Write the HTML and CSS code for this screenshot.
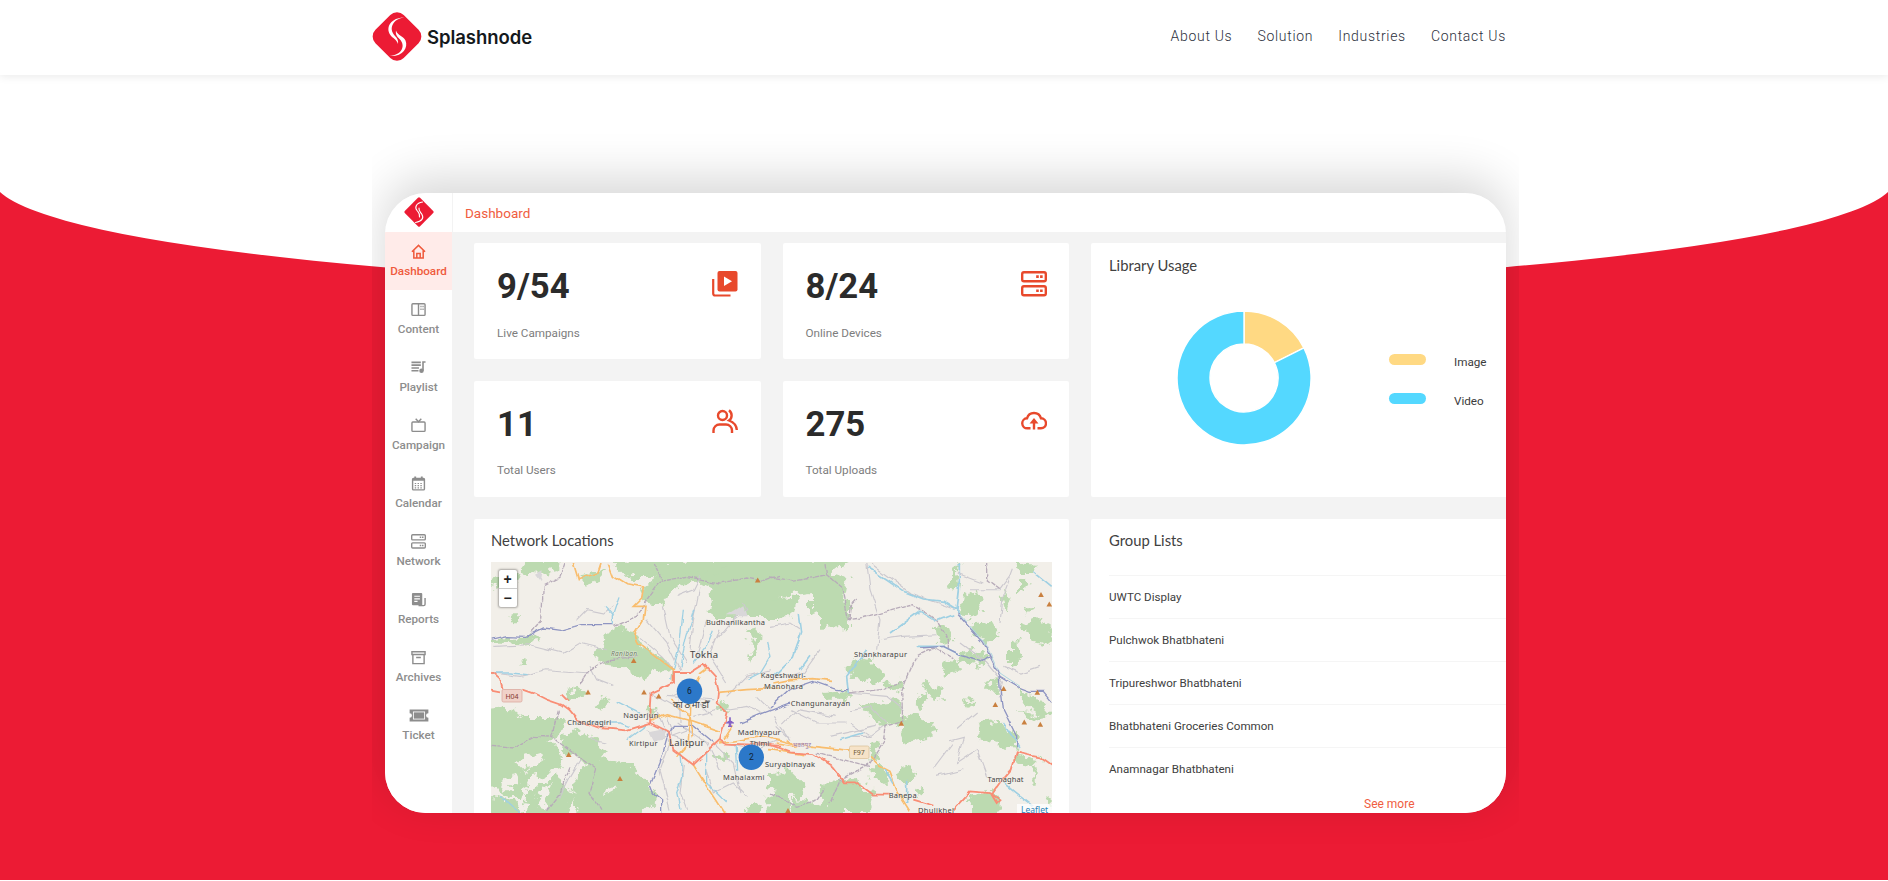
FILE: index.html
```html
<!DOCTYPE html>
<html lang="en">
<head>
<meta charset="utf-8">
<title>Splashnode</title>
<link rel="stylesheet" href="styles.css">
</head>
<body>
<svg class="defs" width="0" height="0">
  <symbol id="server" viewBox="0 0 24 24"><g fill="none" stroke="currentColor" stroke-width="2.2"><rect x="1.1" y="1.1" width="21.8" height="8.300" rx="1.6"/><rect x="1.1" y="14.1" width="21.8" height="8.300" rx="1.6"/></g><path d="M14 4h2.4v2.4H14zM17.6 4H20v2.4h-2.4zM14 17h2.4v2.4H14zM17.6 17H20v2.4h-2.4z" fill="currentColor"/></symbol>
</svg>
<header class="topbar">
  <a class="brand">
    <svg class="brand-mark" viewBox="0 0 50 51"><rect x="5" y="5.5" width="40" height="40" rx="9.500" transform="rotate(45 25 25.5)" fill="#ec1b34"/><path d="M32.500 6.500C19 6.500 13.500 16 18 23.500C20.300 27.300 24.500 28 26 33C26.500 29.500 25.500 27.500 23 25C19.500 21 19 17.500 20.500 14C22.500 9.500 27 7 32.500 6.500Z" fill="#fff"/><path d="M17.500 45C30.500 46 36.500 37 33.500 29.500C31.500 25 25.500 24.500 24 19.500C23.300 23.500 25 25.500 27.500 28C31 31.500 31.300 35.500 29.700 38.500C27.500 42.500 23 44.500 17.500 45Z" fill="#fff"/></svg>
    <span class="brand-name">Splashnode</span>
  </a>
  <nav class="nav"><a>About Us</a><a>Solution</a><a>Industries</a><a>Contact Us</a></nav>
</header>
<main class="hero">
  <svg class="hero-bg" viewBox="0 0 1888 805"><path d="M0 117A951 109.500 0 0 0 1888 117V805H0Z" fill="#ec1b34"/></svg>
  <div class="stage">
    <div class="panel">
      <aside class="side">
        <div class="side-logo"><svg width="32" height="32" viewBox="0 0 32 32"><rect x="5.200" y="5.200" width="21.600" height="21.600" rx="1.500" transform="rotate(45 16 16)" fill="#ec1b34"/><path d="M19.500 6C13 7 11.500 11.500 14 14.500C16 17 17 17.500 16.500 21M12.500 26.500C19 25.500 21 22 19 18.500C17.500 16 15.500 15 16 12" fill="none" stroke="#fff" stroke-width="1.100" stroke-linecap="round"/></svg></div>
        <a class="item active"><svg viewBox="0 0 16 16"><path d="M1 8.300L8 1.500L15 8.300M3 7V15H13V7M6.200 15V10H9.800V15" fill="none" stroke="currentColor" stroke-width="1.600"/></svg><span>Dashboard</span></a>
        <a class="item"><svg viewBox="0 0 16 16"><g fill="none" stroke="currentColor" stroke-width="1.500"><rect x="1" y="1.800" width="14" height="12.500" rx="1"/><path d="M8 2V14"/></g><path d="M10 4h1.300v1.500H10zM12.200 4h1.300v1.500h-1.300zM10 7h1.300v1.500H10zM12.200 7h1.300v1.500h-1.300z" fill="currentColor"/></svg><span>Content</span></a>
        <a class="item"><svg viewBox="0 0 16 16"><path d="M.5 2.500H10.500M.5 5.500H10.500M.5 8.500H8.500M.5 11.500H8M12.800 11.500V2.200H15.500" fill="none" stroke="currentColor" stroke-width="1.700"/><circle cx="11.200" cy="11.500" r="2.400" fill="currentColor"/></svg><span>Playlist</span></a>
        <a class="item"><svg viewBox="0 0 16 16"><g fill="none" stroke="currentColor" stroke-width="1.500"><rect x="1" y="4.300" width="14" height="10" rx="1"/><path d="M5 .8L8 4L11 .8"/></g></svg><span>Campaign</span></a>
        <a class="item"><svg viewBox="0 0 16 16"><g fill="none" stroke="currentColor" stroke-width="1.500"><rect x="1.700" y="2.500" width="12.600" height="12.300" rx="1"/><path d="M1.700 4H14.300M4.500 .5V3M11.500 .5V3" stroke-width="2"/><path d="M4 8H12.500M4 10.300H12.500M4 12.600H12.500" stroke-dasharray="1.500 1.500" stroke-width="1.200"/></g></svg><span>Calendar</span></a>
        <a class="item"><svg viewBox="0 0 24 24"><use href="#server"/></svg><span>Network</span></a>
        <a class="item"><svg viewBox="0 0 16 16"><path d="M2 1H11a1 1 0 0 1 1 1V14H2a1 1 0 0 1-1-1V2a1 1 0 0 1 1-1Z" fill="currentColor"/><path d="M15 6.500V13a1.500 1.500 0 0 1-1.500 1.500H8" fill="none" stroke="currentColor" stroke-width="1.500"/><path d="M3.500 4.500H9.500M3.500 7.300H9.500M3.500 10H7" stroke="#fff" stroke-width="1.200"/></svg><span>Reports</span></a>
        <a class="item"><svg viewBox="0 0 16 16"><g fill="none" stroke="currentColor" stroke-width="1.500"><path d="M1 1.800H15V4.800H1ZM2 4.800V14.500H14V4.800M5.500 8H10.500"/></g></svg><span>Archives</span></a>
        <a class="item"><svg class="wide" viewBox="0 0 20 16"><path d="M0 1.500H20V5.500a2.500 2.500 0 0 0 0 5V14.500H0V10.500a2.500 2.500 0 0 0 0-5Z" fill="currentColor"/><rect x="4" y="4.200" width="12" height="7.600" fill="none" stroke="#fff" stroke-width=".9"/></svg><span>Ticket</span></a>
      </aside>
      <section class="main">
        <div class="crumb">Dashboard</div>
        <div class="grid">
          <div class="stat"><div><b>9/54</b><small>Live Campaigns</small></div>
            <svg viewBox="0 0 26 26"><path d="M1.200 8V22.500a2 2 0 0 0 2 2H18.500" fill="none" stroke="currentColor" stroke-width="2.200"/><rect x="5.500" y="0" width="20" height="20.500" rx="2" fill="currentColor"/><path d="M12 5.500V15L20 10.200Z" fill="#fff"/></svg></div>
          <div class="stat"><div><b>8/24</b><small>Online Devices</small></div>
            <svg viewBox="0 0 24 24"><use href="#server"/></svg></div>
          <div class="card usage">
            <h2>Library Usage</h2>
            <div class="usage-body">
              <svg class="donut" viewBox="-67 -67 134 134"><g stroke="#fff" stroke-width="1.400"><path d="M0 -67A67 67 0 0 1 59.900 -30.100L30.400 -15.300A34 34 0 0 0 0 -34Z" fill="#ffd983"/><path d="M59.900 -30.100A67 67 0 1 1 0 -67V-34A34 34 0 1 0 30.400 -15.300Z" fill="#54d8ff"/></g></svg>
              <ul class="legend"><li><i class="pill image"></i>Image</li><li><i class="pill video"></i>Video</li></ul>
            </div>
          </div>
          <div class="stat"><div><b>11</b><small>Total Users</small></div>
            <svg viewBox="0 -1 26 26"><g fill="none" stroke="currentColor" stroke-width="2.400"><circle cx="10.500" cy="5.500" r="4.500"/><path d="M1.500 23V20.500a6 6 0 0 1 6-6H14a6 6 0 0 1 6 6V23M17 .3C20.500 3 20.500 8 17 10.500C21 12 24.500 14.500 24.800 20"/></g></svg></div>
          <div class="stat"><div><b>275</b><small>Total Uploads</small></div>
            <svg viewBox="0 -1 26 26"><g fill="none" stroke="currentColor" stroke-width="2.400"><path d="M9.500 18.300H6.500A5 5 0 0 1 6 8.300A7.300 7.300 0 0 1 20 8.300A5 5 0 0 1 20 18.300H16.500M13 19.500V10"/></g><path d="M8.500 13.500L13 8L17.500 13.500Z" fill="currentColor"/></svg></div>
          <div class="card network">
            <h2>Network Locations</h2>
            <div class="map">
<svg class="map-art" viewBox="0 0 561 251">
<defs>
<filter id="rough" x="0" y="0" width="100%" height="100%"><feTurbulence type="fractalNoise" baseFrequency=".1" numOctaves="4" seed="4"/><feDisplacementMap in="SourceGraphic" scale="16" xChannelSelector="R" yChannelSelector="G"/></filter>
<filter id="wavy" x="0" y="0" width="100%" height="100%"><feTurbulence type="fractalNoise" baseFrequency=".07" numOctaves="2" seed="9"/><feDisplacementMap in="SourceGraphic" scale="6" xChannelSelector="R" yChannelSelector="G"/></filter>
</defs>
<rect width="561" height="251" fill="#f2efe9"/>
<g filter="url(#rough)" fill="#bcdab0">
<g transform="translate(-11 -52.300) scale(.33333)">
<path d="M150 150H235V180L170 195L120 190ZM20 215L100 190L130 200L90 225L30 240ZM300 195L375 180L360 210L320 225ZM385 150H900V205L470 205L430 195Z"/>
<path d="M560 180L700 190L760 170L900 170V325L700 325L670 300L700 290L690 240L640 215L570 250L540 290L500 285L480 240Z"/>
<path d="M345 435L370 400L395 360L440 350L470 390L510 420L560 460L580 480L545 490L520 480L500 510L470 500L430 470L370 465ZM95 320H120V335H95ZM125 455H140V475H125ZM20 385L150 380L180 400L110 405L20 400Z"/>
<path d="M20 595L70 590L130 625L250 625L240 680L170 695L130 710L90 695L20 690ZM250 675L310 665L350 690L375 720L340 770L300 750L260 740L240 710ZM0 690L200 680L240 740L250 770L200 790L150 800L120 870L60 850L0 790ZM290 790L370 740L450 770L500 820L530 870L470 930H300L280 860ZM140 840L230 800L290 850L250 930H130ZM20 860L90 870L140 930H30ZM260 545L300 535L330 560L300 570L260 565ZM340 580L380 560L390 580L360 600ZM800 360L840 350L835 420L810 460L820 410ZM720 570L750 580L745 610L715 600ZM860 860L930 830V930H870ZM790 910L830 880L850 930H790ZM500 600H520V615H500ZM700 740L740 735V750H700Z"/>
</g>
<g fill="#f2efe9" transform="translate(-11 -52.300) scale(.33333)"><path d="M100 760L190 730L200 745L130 790ZM270 760L300 765L270 850L255 840ZM60 820L110 790L120 810L80 850ZM170 850L210 820L190 900ZM380 840L410 830L400 850Z"/></g>
<g transform="translate(279 -52.300) scale(.33333)">
<path d="M0 150H240L180 195L235 210L225 260L237 270V355L150 357V320L120 310V250L0 262ZM0 262L75 265L80 295L60 323H0ZM235 480L270 445L310 455L345 490L330 520L250 510ZM160 550L230 545L240 570L170 570ZM270 590L390 575L400 640L340 650L310 620ZM345 525L395 510L405 540L370 545ZM385 640L440 620L500 650L470 690L410 700ZM380 775L420 765L445 800L430 820L390 810ZM300 770L330 760L360 800L340 820L305 810ZM300 700L325 690V745L305 750Z"/>
<path d="M570 160L560 240L530 235L545 200ZM580 240L630 260L640 295L600 330L570 310ZM600 345L670 335L690 370L650 400L620 380ZM500 350L540 360L550 390L510 400ZM560 430L620 420L660 450L620 465L560 455ZM520 460L560 450L570 480L530 500ZM720 400L745 395L750 450L720 470ZM740 160L800 165L790 190L750 190ZM750 205L775 215L765 250L750 240ZM760 345L800 330L845 350L845 405L800 395L770 375ZM765 285L790 280L770 315ZM690 250L720 255L710 310L700 300ZM430 560L470 550L480 580L450 600ZM460 520L520 540L510 570L480 560ZM580 570L605 575L600 595ZM640 520L680 515L690 540H650ZM740 530L800 560L845 610L830 625L770 590ZM750 605L840 615L830 620L760 625ZM620 640L680 630L740 680L735 725L690 700L630 690ZM740 740L810 750L790 770L745 765ZM790 770H800V825H790ZM590 865L670 845L690 880L680 920H620ZM0 800L60 780L110 830L90 870L0 830ZM140 830L240 800L310 850L300 910H200L160 870ZM70 870L200 890L220 920H60ZM440 835L470 845L450 860ZM830 870L845 860V900Z"/>
</g></g>
<g filter="url(#wavy)" fill="none">
<g transform="translate(-11 -52.300) scale(.33333)">
<g stroke="#ccc9cf" stroke-width="3.400"><path d="M290 330L320 300L370 310L400 290M40 410L150 405L250 430L300 400L380 420M40 490L120 500L200 480L330 490M330 470L350 510L400 530M480 380L550 440L580 480M500 330L560 400L600 480M550 290L570 380L620 460M660 230L640 330L630 420M590 260L640 240L660 200M700 400L760 330L800 300L790 280M680 330L650 440M720 360L690 440L740 520M740 560L800 500L870 480M510 550L600 600M530 600L570 700L540 780L570 900M590 640L680 700L720 780M600 520V640M560 560L700 570M640 620L720 600M580 560L620 540L700 620M610 760L600 850L620 900M680 780L700 850L760 820L800 860M700 700L760 760L780 850M560 620L580 680L640 700M540 690L620 660M740 700L830 720L900 690M730 600L800 590L850 610M500 660L550 690M300 750L270 800L240 860M380 700L330 690M830 560L870 600"/></g>
<g fill="#d9d7d9"><path d="M505 665L555 655V690L520 695ZM740 320L790 290L800 320ZM165 195L185 185L180 215Z"/></g>
<g stroke="#b7abb9" stroke-width="4" stroke-dasharray="14 3"><path d="M255 160L240 200L190 225L185 330L150 370M400 350L470 320L500 270L540 215L620 200L720 220L800 205L850 215L900 200M520 160L545 210M35 710L100 715L160 680L215 682L300 745L350 780L330 850L360 900M235 600L215 680M300 520L320 490L390 450L470 440M270 770L240 850L200 900"/></g>
<g stroke="#8f95c2" stroke-width="4"><path d="M35 388L80 378L140 380L190 355L240 362L300 345L400 345M515 820L540 760L560 690L580 650L640 650L700 700M520 850L545 870V920M780 640L850 610L930 580M510 825L520 850"/></g>
<g stroke="#9fd0e3" stroke-width="4"><path d="M375 290L405 320M420 260L400 320V345M35 490L90 490L140 495M610 300L600 400L580 480L575 510M645 300L620 380L600 470M700 360L680 410L640 460M860 400L870 440L840 490L800 510M410 575L480 610M330 640L420 640L450 650M440 690L500 645M600 730L605 800L590 850L600 900M680 730V820L740 880M765 700L770 780M60 860L120 910"/></g>
<g stroke="#f9bd6d" stroke-width="5"><path d="M280 160L295 210L350 190L360 160M385 160L400 200L440 225L490 235L485 265L460 290L495 290L490 330L465 370L475 400L540 450L580 480V515M510 635L560 615L620 630L720 665M570 570L630 620L640 680M660 500L630 560L625 700L590 740M640 765L680 830L735 915M715 548L800 540L900 535M735 690L760 650M660 490L680 475M720 700L850 680L900 690"/></g>
<g stroke="#f98d74" stroke-width="5.500"><path d="M33 485L60 510L68 540M33 540L60 545M130 540L160 550L200 570L245 585L265 600L290 630L360 655L440 662L510 640L570 670L580 720L640 765L720 690L740 610L710 580L715 540L705 500L670 462L630 487H582V517L515 548L510 640M720 690L740 702L900 708M245 555L265 575"/></g>
</g>
<g transform="translate(279 -52.300) scale(.33333)">
<g stroke="#ccc9cf" stroke-width="3.400"><path d="M290 160L300 240L330 330L320 420M600 240L690 240L720 200M730 180L700 260L690 340M330 390L400 380L500 375M240 550L350 560L400 600M240 600L300 590L350 640M40 640L80 600L200 620M60 600L140 640L230 640M540 690L580 680L560 760L620 720L650 800M490 780L550 700M500 800L580 780M560 660L620 610M700 470L750 490L810 470M570 400L650 460L700 520L690 560M0 350L60 340L90 360M150 420L100 490L60 500M300 160L420 250L560 300M180 680L320 650M20 650L60 690L10 620M250 680H300M560 190L640 220M240 640L300 680L340 650"/></g>
<g stroke="#b7abb9" stroke-width="4" stroke-dasharray="14 3"><path d="M0 205L70 215L170 195L215 235L235 330L300 320L430 285L500 330L535 390V415M165 160L170 195M240 330L245 280L260 265M405 520L440 440L490 415L550 450M235 550L330 540L410 510L395 545L398 635L345 650L340 700L300 760L210 810L180 880M650 160V210L690 240M140 730L220 750L300 770M0 850L80 890L140 870L160 840"/></g>
<g stroke="#9fd0e3" stroke-width="5"><path d="M295 175L350 210L400 245L460 268L520 275L560 300M568 160V240L560 310M360 370L400 340L450 305L500 335L550 315M88 315L95 370L70 440L10 500M235 550L230 500L290 420M440 410L520 410L570 435M790 185L845 230M700 820L750 860L790 890M410 810V880M120 440L90 480M210 690L280 670M345 780L370 820M700 640L750 715"/></g>
<g stroke="#8f95c2" stroke-width="4"><path d="M560 310L640 400L660 440L690 500L740 530L780 545H820L845 575M660 440L640 455L570 435L520 410L450 415M0 595L60 540L130 515L200 540H235M690 500L700 600L740 680V715"/></g>
<g stroke="#aed5df" stroke-width="3"><path d="M560 305L645 400L690 490L750 530"/></g>
<g stroke="#f9bd6d" stroke-width="5"><path d="M0 685L60 700L130 710L240 722M0 720L100 735M10 520L60 510L130 507L180 512M300 740L330 770L360 785L385 850L420 905M20 700L80 710L50 690"/></g>
<g stroke="#f98d74" stroke-width="5.500"><path d="M0 705L60 728L130 733L190 770L225 815L255 815L310 855H360M430 870L490 888M550 900L600 845L660 850L690 870L680 880L665 855L690 820L725 780L740 725L780 735L810 740L845 765"/></g>
</g></g>
<defs><path id="peak" d="M-2.800 0L0 -5L2.800 0z"/></defs>
<g fill="#c9803f"><use href="#peak" x="142.700" y="101"/><use href="#peak" x="97" y="132.400"/><use href="#peak" x="153" y="132.400"/><use href="#peak" x="167.700" y="136.400"/><use href="#peak" x="77.700" y="195"/><use href="#peak" x="129" y="219"/><use href="#peak" x="266.700" y="20.400"/><use href="#peak" x="550" y="35"/><use href="#peak" x="558.300" y="44.400"/><use href="#peak" x="512.700" y="129"/><use href="#peak" x="546.300" y="132.700"/><use href="#peak" x="504.300" y="145"/><use href="#peak" x="533.300" y="162.400"/><use href="#peak" x="549.300" y="164.700"/><use href="#peak" x="410.300" y="163.700"/><use href="#peak" x="297" y="251"/></g>
<rect x="11" y="127.500" width="20" height="12.500" rx="1.500" fill="#f0d1c8" stroke="#dcaaa0" stroke-width=".8"/><text x="21" y="136.500" class="road h">H04</text>
<rect x="358.500" y="184" width="19.500" height="12.500" rx="1.500" fill="#f6e3c8" stroke="#dcc49c" stroke-width=".8"/><text x="368" y="193" class="road">F97</text>
<path d="M239.200 155.500v3l3.500 2.500h-3v2.500l1.200 1h-3.800l1.200-1v-2.500h-3l3.500-2.500v-3z" fill="#8461c4" stroke="#8461c4"/>
<g class="places">
<text x="215" y="62.500" textLength="59">Budhanilkantha</text><text x="199" y="95.500" class="town" textLength="28">Tokha</text><text x="120" y="94" class="wood" textLength="26">Raniban</text>
<text x="269.700" y="116" textLength="45">Kageshwari-</text><text x="273" y="126.500" textLength="39">Manohara</text><text x="363" y="94.500" textLength="53">Shankharapur</text><text x="299.700" y="143.500" textLength="59.500">Changunarayan</text>
<text x="132.300" y="156" textLength="35">Nagarjun</text><text x="76.300" y="163" textLength="44">Chandragiri</text><text x="138" y="184" textLength="28.500">Kirtipur</text><text x="178" y="183.500" class="town" textLength="35.500">Lalitpur</text>
<text x="246.700" y="173" textLength="43">Madhyapur</text><text x="268.500" y="183.500" text-anchor="middle">Thimi</text><text x="274" y="204.500" textLength="50">Suryabinayak</text><text x="232" y="218" textLength="41.500">Mahalaxmi</text><text x="397.700" y="235.500" textLength="28">Banepa</text><text x="427" y="250.500" textLength="36">Dhulikhel</text><text x="496.500" y="219.500" textLength="36">Tamaghat</text>
<text x="182" y="146" class="town" textLength="36">काठमाडौँ</text><text x="302" y="184.500" class="np" textLength="18">भक्तपुर</text>
</g>
<circle cx="198.500" cy="129.300" r="12.700" fill="#2c78c9"/><text x="198.500" y="131.500" class="pin">6</text>
<circle cx="260.300" cy="195.300" r="12.700" fill="#2c78c9"/><text x="260.300" y="197.500" class="pin">2</text>
</svg>
              <div class="zoomer"><span>+</span><span>−</span></div>
              <span class="credit">Leaflet</span>
            </div>
          </div>
          <div class="card groups">
            <h2>Group Lists</h2>
            <ul><li>UWTC Display</li><li>Pulchwok Bhatbhateni</li><li>Tripureshwor Bhatbhateni</li><li>Bhatbhateni Groceries Common</li><li>Anamnagar Bhatbhateni</li></ul>
            <a class="more">See more</a>
          </div>
        </div>
      </section>
    </div>
  </div>
</main>
</body>
</html>
```
FILE: styles.css
```css
* { box-sizing: border-box; }
html, body { margin: 0; height: 881px; overflow: hidden; background: #fff; font-family: Roboto, sans-serif; }
ul { list-style: none; margin: 0; padding: 0; }
.defs { position: absolute; }

.topbar { position: relative; z-index: 2; height: 75px; padding: 0 382px 0 372px; display: flex; justify-content: space-between; background: #fff; box-shadow: 0 2px 8px rgba(0, 0, 0, .08); }
.brand { display: flex; align-items: flex-start; padding-top: 11px; gap: 5px; }
.brand-mark { width: 50px; height: 51px; }
.brand-name { font: 600 18.500px/52px Inter, sans-serif; color: #14191c; letter-spacing: -.05px; }
.nav { display: flex; gap: 25px; padding-top: 26px; font-weight: 300; font-size: 14px; line-height: 20px; letter-spacing: .7px; color: #2c303c; }

.hero { position: relative; height: 805px; }
.hero-bg { position: absolute; inset: 0; width: 100%; height: 805px; }
.stage { position: relative; margin-left: 372px; width: 1147px; padding: 118px 13px 0; clip-path: inset(0); height: 805px; }
.panel { display: flex; width: 1121px; height: 620px; border-radius: 41px; overflow: hidden; background: #f3f3f3; box-shadow: 0 -14px 48px rgba(0, 0, 0, .16); }

.side { width: 67px; flex: none; background: #fff; }
.side-logo { height: 39px; padding: 3px 0 0 17.500px; }
.side-logo svg { display: block; }
.item { display: flex; flex-direction: column; align-items: center; height: 58px; padding-top: 11.500px; font-weight: 500; font-size: 11.700px; line-height: 14px; color: #8d8d8d; }
.item svg { width: 15px; height: 15px; margin-bottom: 5.500px; }
.item svg.wide { width: 20px; }
.item.active { background: #ffebe9; color: #ef5a3c; }

.main { flex: 1; min-width: 0; }
.crumb { height: 39px; padding-left: 12px; font-size: 13.500px; line-height: 41px; background: #fff; border-left: 1px solid #f3f3f3; color: #f05d41; }
.grid { display: grid; grid-template-columns: 286.500px 286.500px 430px; grid-template-rows: 115.700px 115.700px 330px; gap: 22px; padding: 11.200px 0 0 22px; }
.stat, .card { background: #fff; border-radius: 2px; }
.stat { display: flex; justify-content: space-between; padding: 23px 22.500px 0 23px; }
.stat b { display: block; font-size: 34.700px; line-height: 41px; color: #2b2b2b; }
.stat small { display: block; margin-top: 18.500px; font-size: 11.700px; line-height: 14px; color: #7d7d7d; }
.stat svg { width: 26px; height: 26px; margin-top: 5px; color: #e8492c; }

h2 { margin: 0; font: 400 14.800px/20px Lato, sans-serif; color: #414141; }
.card { padding: 11.500px 17px 0; }
.usage { grid-row: span 2; padding-left: 18px; }
.usage-body { display: flex; padding: 36.500px 0 0 67.500px; }
.donut { width: 134px; height: 134px; }
.legend { padding: 41.500px 0 0 78px; font-size: 11.700px; line-height: 19px; color: #3c3c3c; }
.legend li { display: flex; align-items: center; gap: 28.500px; margin-bottom: 20px; }
.pill { width: 37px; height: 11px; border-radius: 6px; margin-top: -5px; }
.image { background: #ffd983; }
.video { background: #54d8ff; }

.network { grid-column: span 2; }
.map { position: relative; width: 561px; height: 251px; margin-top: 12px; overflow: hidden; }
.map-art { display: block; width: 561px; height: 251px; }
.places text { font: 7.500px "Noto Sans", sans-serif; fill: #444; stroke: #f2efe9; stroke-width: 1.200px; stroke-opacity: .6; paint-order: stroke; }
.places .town { font-size: 9.500px; }
.places .wood { font-size: 6.500px; font-style: italic; fill: #6d7c66; }
.places .np { font-size: 6px; fill: #9a77a3; }
.road { font: 7px "Noto Sans", sans-serif; text-anchor: middle; fill: #6b5737; }
.road.h { fill: #873a33; }
.pin { font: 8.500px Roboto, sans-serif; text-anchor: middle; fill: #10202e; }
.zoomer { position: absolute; left: 7.500px; top: 7.500px; width: 18px; background: #fff; border-radius: 2px; box-shadow: 0 0 2px 1px rgba(0, 0, 0, .3); }
.zoomer span { display: block; height: 18.500px; text-align: center; font: bold 14px/18px "Liberation Sans", sans-serif; color: #222; }
.zoomer span + span { border-top: 1px solid #ccc; }
.credit { position: absolute; right: 0; bottom: -3px; padding: 0 4px; background: rgba(255, 255, 255, .75); font: 8.500px/12px "Noto Sans", sans-serif; color: #2b83b8; }

.groups { padding: 11.500px 0 0 18px; }
.groups ul { margin-top: 25px; }
.groups li { height: 43px; padding-top: 10.500px; border-top: 1px solid #f5f5f5; font-size: 11.600px; line-height: 20px; color: #404040; }
.more { display: block; margin-left: 255px; margin-top: 7px; font-size: 12px; line-height: 14px; color: #f05d41; }
```
